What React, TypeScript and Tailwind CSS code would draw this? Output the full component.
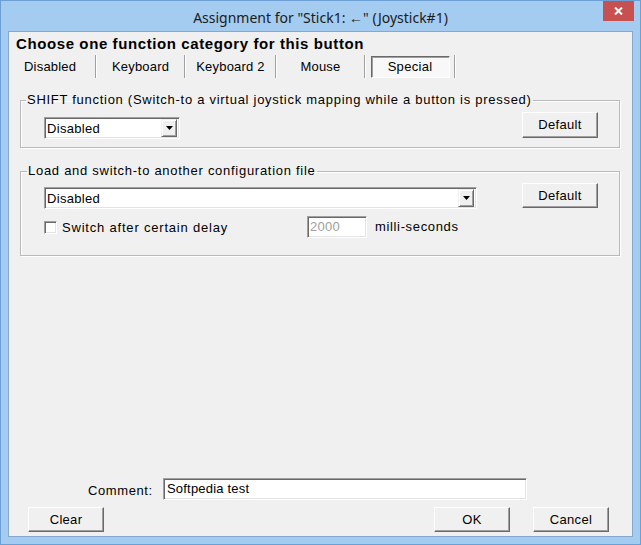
import React from "react";

const btn =
  "flex items-center justify-center bg-[#f0f0f0] border border-t-white border-l-white border-r-[#696969] border-b-[#696969] shadow-[inset_-1px_-1px_0_#a0a0a0] text-[13px] text-black tracking-[0.3px]";

const sunken =
  "border border-t-[#a0a0a0] border-l-[#a0a0a0] border-r-white border-b-white shadow-[inset_1px_1px_0_#696969,inset_-1px_-1px_0_#e3e3e3] bg-white";

function Arrow() {
  return (
    <div className="flex items-center justify-center w-[16px] h-[18px] bg-[#f0f0f0] border border-t-[#f0f0f0] border-l-[#f0f0f0] border-r-[#696969] border-b-[#696969] shadow-[inset_1px_1px_0_#fff,inset_-1px_-1px_0_#a0a0a0]">
      <svg width="7" height="4" viewBox="0 0 7 4">
        <path d="M0 0h7L3.5 4z" fill="#000" />
      </svg>
    </div>
  );
}

function Select({ w, label }: { w: string; label: string }) {
  return (
    <div className={`${sunken} ${w} h-[22px] flex items-center justify-between pl-[2px] pr-[2px]`}>
      <span className="leading-none tracking-[0.3px]">{label}</span>
      <Arrow />
    </div>
  );
}

function Sep() {
  return <div className="w-[2px] h-[23px] border-l border-l-[#a0a0a0] border-r border-r-white" />;
}

export default function App() {
  return (
    <div
      className="w-[641px] h-[545px] bg-[#a3ccf0] border border-[#6d9fd5] flex flex-col text-[13px] text-black"
      style={{ fontFamily: '"Liberation Sans", Arial, sans-serif' }}
    >
      {/* Title bar */}
      <div className="h-[30px] flex items-start">
        <div className="w-[37px]" />
        <div
          className="flex-1 text-center text-[14px] leading-[20px] pt-[7px] text-[#1b1b1b]"
          style={{ fontFamily: '"Noto Sans", "Open Sans", sans-serif' }}
        >
          Assignment for "Stick1: ←" (Joystick#1)
        </div>
        <div className="w-[31px] h-[20px] mr-[6px] bg-[#c75050] flex items-center justify-center">
          <svg width="9" height="8" viewBox="0 0 9 8">
            <path d="M1 0.5L8 7.5M8 0.5L1 7.5" stroke="#fff" strokeWidth="2" />
          </svg>
        </div>
      </div>

      {/* Content */}
      <div className="flex-1 mx-[7px] mb-[7px] bg-[#f0f0f0] border border-[#86a8cc] flex flex-col">
        <div className="pl-[7px] pt-[3px] h-[23px] text-[15px] font-bold leading-[18px] tracking-[0.6px]">
          Choose one function category for this button
        </div>

        {/* Tabs */}
        <div className="flex items-center h-[23px]">
          <div className="w-[86px] pl-[15px] leading-none tracking-[0.2px]">Disabled</div>
          <Sep />
          <div className="w-[87px] text-center leading-none tracking-[0.2px]">Keyboard</div>
          <Sep />
          <div className="w-[89px] text-center leading-none tracking-[0.2px]">Keyboard 2</div>
          <Sep />
          <div className="w-[87px] text-center leading-none tracking-[0.2px]">Mouse</div>
          <Sep />
          <div className="w-[88px] flex justify-center">
            <div className="w-[79px] h-[22px] flex items-center justify-center bg-[#f8f8f8] border border-t-[#696969] border-l-[#696969] border-r-white border-b-white shadow-[inset_1px_1px_0_#a0a0a0] tracking-[0.3px]">
              Special
            </div>
          </div>
          <Sep />
        </div>

        {/* Group 1 */}
        <fieldset className="ml-[11px] w-[600px] mt-[14px] border border-[#b9b9b9] shadow-[inset_1px_1px_0_#fff,1px_1px_0_#fff]">
          <legend className="ml-[5px] px-[1px] leading-[16px] tracking-[0.72px]">
            SHIFT function (Switch-to a virtual joystick mapping while a button is pressed)
          </legend>
          <div className="flex items-start justify-between pb-[8px] pl-[23px] pr-[21px]">
            <div className="mt-[9px]">
              <Select w="w-[136px]" label="Disabled" />
            </div>
            <div className={`${btn} w-[76px] h-[26px] mt-[4px]`}>Default</div>
          </div>
        </fieldset>

        {/* Group 2 */}
        <fieldset className="ml-[11px] w-[600px] mt-[15px] border border-[#b9b9b9] shadow-[inset_1px_1px_0_#fff,1px_1px_0_#fff]">
          <legend className="ml-[6px] px-[1px] leading-[16px] tracking-[0.72px]">
            Load and switch-to another configuration file
          </legend>
          <div className="flex items-start justify-between pb-[17px] pl-[23px] pr-[21px]">
            <div className="flex flex-col mt-[8px]">
              <Select w="w-[433px]" label="Disabled" />
              <div className="flex items-center mt-[7px] h-[22px]">
                <div className={`${sunken} w-[13px] h-[13px]`} />
                <div className="ml-[5px] w-[245px] tracking-[0.8px] pt-[2px]">Switch after certain delay</div>
                <div className={`${sunken} w-[60px] h-[22px] flex items-center pl-[2px] text-[#a0a0a0] tracking-[0.3px]`}>2000</div>
                <div className="ml-[8px] tracking-[0.65px]">milli-seconds</div>
              </div>
            </div>
            <div className={`${btn} w-[76px] h-[25px] mt-[4px]`}>Default</div>
          </div>
        </fieldset>

        <div className="flex-1" />

        {/* Comment */}
        <div className="flex items-center pl-[79px]">
          <div className="w-[65px] tracking-[0.6px] pt-[3px]">Comment:</div>
          <div className={`${sunken} ml-[10px] w-[364px] h-[22px] flex items-center pl-[3px] tracking-[0.2px]`}>Softpedia test</div>
        </div>

        {/* Buttons */}
        <div className="flex items-center mt-[7px] mb-[4px] pl-[19px] pr-[23px]">
          <div className={`${btn} w-[76px] h-[25px]`}>Clear</div>
          <div className="flex-1" />
          <div className={`${btn} w-[76px] h-[25px]`}>OK</div>
          <div className={`${btn} w-[76px] h-[25px] ml-[23px]`}>Cancel</div>
        </div>
      </div>
    </div>
  );
}
